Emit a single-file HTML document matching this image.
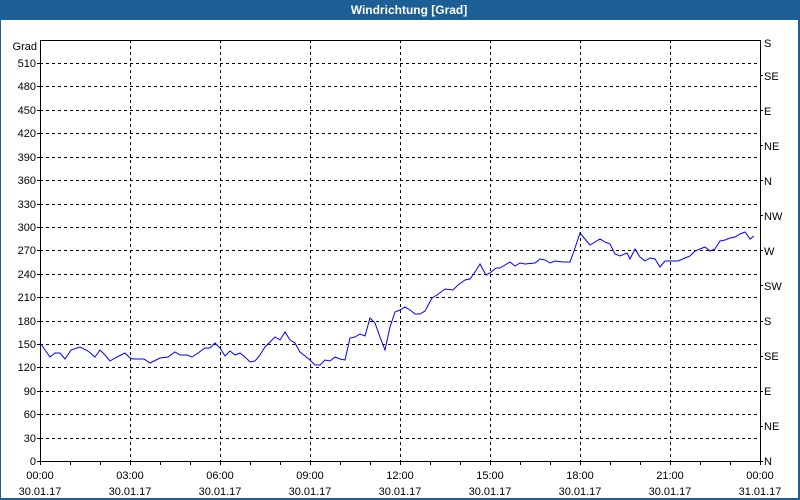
<!DOCTYPE html>
<html><head><meta charset="utf-8"><style>
html,body{margin:0;padding:0;width:800px;height:500px;overflow:hidden;background:#fff}
svg{display:block}
text{font-family:"Liberation Sans","DejaVu Sans",sans-serif;font-size:11px;fill:#000}
</style></head><body>
<svg width="800" height="500" viewBox="0 0 800 500" xmlns="http://www.w3.org/2000/svg">
<rect x="0" y="0" width="800" height="500" fill="#1c5f97"/>
<rect x="1" y="20" width="797" height="478" fill="#fff"/>
<text x="409" y="14" text-anchor="middle" style="font-weight:bold;fill:#fff;font-size:12px">Windrichtung [Grad]</text>
<g stroke="#000" stroke-width="1" stroke-dasharray="3,3" shape-rendering="crispEdges">
<line x1="40" x2="760" y1="63.5" y2="63.5"/><line x1="40" x2="760" y1="86.5" y2="86.5"/><line x1="40" x2="760" y1="110.5" y2="110.5"/><line x1="40" x2="760" y1="133.5" y2="133.5"/><line x1="40" x2="760" y1="157.5" y2="157.5"/><line x1="40" x2="760" y1="180.5" y2="180.5"/><line x1="40" x2="760" y1="204.5" y2="204.5"/><line x1="40" x2="760" y1="227.5" y2="227.5"/><line x1="40" x2="760" y1="250.5" y2="250.5"/><line x1="40" x2="760" y1="274.5" y2="274.5"/><line x1="40" x2="760" y1="297.5" y2="297.5"/><line x1="40" x2="760" y1="321.5" y2="321.5"/><line x1="40" x2="760" y1="344.5" y2="344.5"/><line x1="40" x2="760" y1="367.5" y2="367.5"/><line x1="40" x2="760" y1="391.5" y2="391.5"/><line x1="40" x2="760" y1="414.5" y2="414.5"/><line x1="40" x2="760" y1="438.5" y2="438.5"/>
<line x1="130.5" x2="130.5" y1="40" y2="461"/><line x1="220.5" x2="220.5" y1="40" y2="461"/><line x1="310.5" x2="310.5" y1="40" y2="461"/><line x1="400.5" x2="400.5" y1="40" y2="461"/><line x1="490.5" x2="490.5" y1="40" y2="461"/><line x1="580.5" x2="580.5" y1="40" y2="461"/><line x1="670.5" x2="670.5" y1="40" y2="461"/>
</g>
<g stroke="#000" stroke-width="1" shape-rendering="crispEdges" fill="none">
<path d="M40.5 40.5 H760.5 V461.5 H40.5 Z"/>
<path d="M37 63.5h3M37 86.5h3M37 110.5h3M37 133.5h3M37 157.5h3M37 180.5h3M37 204.5h3M37 227.5h3M37 250.5h3M37 274.5h3M37 297.5h3M37 321.5h3M37 344.5h3M37 367.5h3M37 391.5h3M37 414.5h3M37 438.5h3M37 461.5h3"/>
<path d="M760 75.5h3M760 110.5h3M760 145.5h3M760 180.5h3M760 215.5h3M760 250.5h3M760 285.5h3M760 321.5h3M760 356.5h3M760 391.5h3M760 426.5h3M760 461.5h3"/>
<path d="M40.5 461v4M70.5 461v4M100.5 461v4M130.5 461v4M160.5 461v4M190.5 461v4M220.5 461v4M250.5 461v4M280.5 461v4M310.5 461v4M340.5 461v4M370.5 461v4M400.5 461v4M430.5 461v4M460.5 461v4M490.5 461v4M520.5 461v4M550.5 461v4M580.5 461v4M610.5 461v4M640.5 461v4M670.5 461v4M700.5 461v4M730.5 461v4M760.5 461v4"/>
</g>
<polyline fill="none" stroke="#0000ff" stroke-width="1" points="40,343 43,347 50,357 55,353 60,353 65,359 71,350 80,347 88,351 95,357 100,350 105,355 110,361 117,357 125,353 130,358 133,359 144,359 150,363 160,358 168,357 175,352 180,355 187,355 192,357 198,353 205,348 210,348 215,343 220,348 225,356 230,351 235,355 240,353 245,357 250,362 255,361 260,355 265,347 270,342 275,337 280,340 285,332 290,340 295,343 300,352 305,356 310,360 315,365 320,365 325,360 330,361 335,357 340,359 345,360 350,338 355,337 360,334 365,336 370,318 375,323 380,337 385,350 390,327 395,312 400,310 405,307 410,310 415,314 420,314 425,311 432,298 437,295 445,289 453,290 458,285 465,280 470,279 475,272 480,264 486,275 490,273 496,268 500,268 510,262 515,266 520,263 525,264 535,263 540,259 545,260 550,263 555,261 563,262 570,262 575,248 580,233 585,239 590,245 595,242 600,239 605,242 610,244 615,254 620,256 627,253 630,259 635,249 640,257 645,261 650,258 655,259 660,267 665,261 670,261 678,261 685,258 690,256 695,251 700,249 705,247 710,251 715,249 720,241 725,240 730,238 735,237 740,234 745,232 750,239 754,236"/>
<g text-anchor="end">
<text x="37" y="50">Grad</text>
<text x="36" y="67">510</text><text x="36" y="90">480</text><text x="36" y="114">450</text><text x="36" y="137">420</text><text x="36" y="161">390</text><text x="36" y="184">360</text><text x="36" y="208">330</text><text x="36" y="231">300</text><text x="36" y="254">270</text><text x="36" y="278">240</text><text x="36" y="301">210</text><text x="36" y="325">180</text><text x="36" y="348">150</text><text x="36" y="371">120</text><text x="36" y="395">90</text><text x="36" y="418">60</text><text x="36" y="442">30</text><text x="36" y="465">0</text>
</g>
<g>
<text x="764" y="47">S</text><text x="764" y="80">SE</text><text x="764" y="115">E</text><text x="764" y="150">NE</text><text x="764" y="185">N</text><text x="764" y="220">NW</text><text x="764" y="255">W</text><text x="764" y="290">SW</text><text x="764" y="325">S</text><text x="764" y="360">SE</text><text x="764" y="395">E</text><text x="764" y="430">NE</text><text x="764" y="465">N</text>
</g>
<g text-anchor="middle">
<text x="40" y="479">00:00</text><text x="40" y="495">30.01.17</text>
<text x="130" y="479">03:00</text><text x="130" y="495">30.01.17</text>
<text x="220" y="479">06:00</text><text x="220" y="495">30.01.17</text>
<text x="310" y="479">09:00</text><text x="310" y="495">30.01.17</text>
<text x="400" y="479">12:00</text><text x="400" y="495">30.01.17</text>
<text x="490" y="479">15:00</text><text x="490" y="495">30.01.17</text>
<text x="580" y="479">18:00</text><text x="580" y="495">30.01.17</text>
<text x="670" y="479">21:00</text><text x="670" y="495">30.01.17</text>
<text x="760" y="479">00:00</text><text x="760" y="495">31.01.17</text>
</g>
</svg>
</body></html>
